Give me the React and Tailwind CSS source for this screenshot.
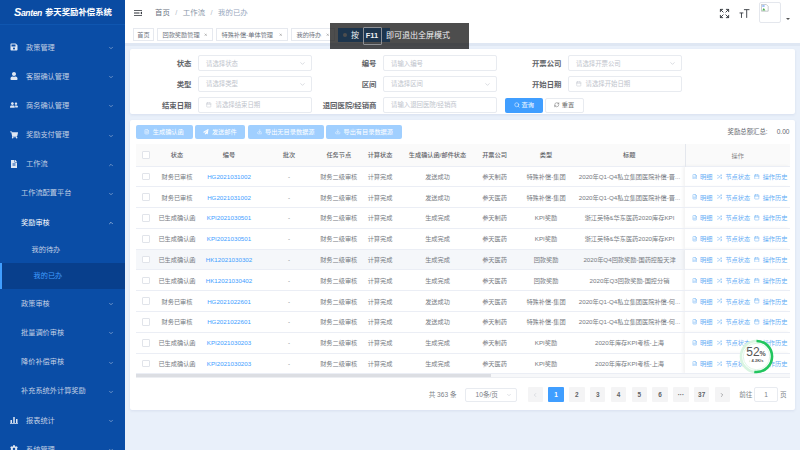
import React from "react";
import { ChevronDown, ChevronUp, ChevronLeft, ChevronRight, FileText, Download, Search, RefreshCw, Calendar, Expand, X, Shuffle, FileSpreadsheet } from "lucide-react";
import { FaSave, FaUser, FaUserFriends, FaShoppingCart, FaFileAlt, FaCog, FaPaperPlane } from "react-icons/fa";

const menu = [
  { label: "政策管理", icon: FaSave },
  { label: "客服确认管理", icon: FaUser },
  { label: "商务确认管理", icon: FaUserFriends },
  { label: "奖励支付管理", icon: FaShoppingCart },
  { label: "工作流", icon: FaFileAlt, open: true },
];

const rows = [
  ["财务已审核", "HG2021031002", "发送成功", "参天制药", "特殊补偿-集团", "2020年Q1-Q4私立集团医院补偿-晋..."],
  ["财务已审核", "HG2021031002", "发送成功", "参天医药", "特殊补偿-集团", "2020年Q1-Q4私立集团医院补偿-晋..."],
  ["已生成确认函", "KPI2021030501", "生成完成", "参天制药", "KPI奖励", "浙江英特&华东医药2020库存KPI"],
  ["已生成确认函", "KPI2021030501", "生成完成", "参天医药", "KPI奖励", "浙江英特&华东医药2020库存KPI"],
  ["已生成确认函", "HK12021030302", "生成完成", "参天医药", "回款奖励", "2020年Q4回款奖励-国药控股天津"],
  ["已生成确认函", "HK12021030402", "生成完成", "参天医药", "回款奖励", "2020年Q3回款奖励-国控分销"],
  ["财务已审核", "HG2021022601", "发送成功", "参天医药", "特殊补偿-集团", "2020年Q1-Q4私立集团医院补偿-何..."],
  ["财务已审核", "HG2021022601", "发送成功", "参天制药", "特殊补偿-集团", "2020年Q1-Q4私立集团医院补偿-何..."],
  ["已生成确认函", "KPI2021030203", "生成完成", "参天制药", "KPI奖励", "2020年库存KPI考核-上海"],
  ["已生成确认函", "KPI2021030203", "生成完成", "参天医药", "KPI奖励", "2020年库存KPI考核-上海"],
];

const BarsIcon = ({ className }) => (
  <svg viewBox="0 0 16 16" className={className} fill="currentColor">
    <path d="M1 8h3v6H1zM6.5 2h3v12h-3zM12 6h3v8h-3zM0 14.6h16V16H0z" />
  </svg>
);

const MenuItem = ({ label, icon: Icon, open }) => (
  <div className="flex items-center h-[29.2px] pt-[1.5px] pl-[10px] pr-[11px] text-[7.2px] text-[#c3d0e4]">
    <Icon className="w-[8px] h-[8px] text-[#dfe7f3] mr-[8px] -mt-[2px]" />
    <span className="flex-1">{label}</span>
    {open ? <ChevronUp className="w-[6px] h-[6px]" /> : <ChevronDown className="w-[6px] h-[6px]" />}
  </div>
);

const SubItem = ({ label, open, bold }) => (
  <div className={`flex items-center h-[29.2px] pt-[1.5px] pl-[21px] pr-[11px] text-[7.2px] ${bold ? "text-white" : "text-[#c3d0e4]"}`}>
    <span className="flex-1">{label}</span>
    {open ? <ChevronUp className="w-[6px] h-[6px]" /> : <ChevronDown className="w-[6px] h-[6px]" />}
  </div>
);

const Sidebar = () => (
  <div className="w-[125px] h-[450px] shrink-0 overflow-hidden bg-[#0a4da6]">
    <div className="flex items-center h-[25px] pl-[14px] border-b border-[#0f56b0] bg-[#0a4ba2] text-white">
      <span className="text-[8.6px] italic font-bold tracking-[-0.4px] w-[31px]">
        <span className="text-[11px]">S</span>anten
      </span>
      <span className="text-[8.4px] font-bold whitespace-nowrap">参天奖励补偿系统</span>
    </div>
    <div className="pt-[7.6px]">
      {menu.map((m) => (
        <MenuItem key={m.label} {...m} />
      ))}
      <SubItem label="工作流配置平台" />
      <SubItem label="奖励审核" open bold />
      <div className="flex items-center h-[26px] pt-[1.5px] pl-[31.5px] text-[7.2px] text-[#c3d0e4]">我的待办</div>
      <div className="flex items-center h-[26px] pt-[1.5px] pl-[31.5px] text-[7.2px] text-[#409eff] bg-[#083f8c] border-l-2 border-[#409eff]">我的已办</div>
      <SubItem label="政策审核" />
      <SubItem label="批量调价审核" />
      <SubItem label="降价补偿审核" />
      <SubItem label="补充系统外计算奖励" />
      <MenuItem label="报表统计" icon={BarsIcon} />
      <MenuItem label="系统管理" icon={FaCog} />
    </div>
  </div>
);

const Navbar = () => (
  <div className="flex items-center h-[26px] bg-white pl-[9px] pr-[10px] text-[7.4px] text-[#8a97a8]">
    <svg viewBox="0 0 16 12" className="w-[8px] h-[6px] mr-[13px]" fill="#2b2f36">
      <path d="M0 0h16v1.6H0zM0 5.2h11v1.6H0zM0 10.4h16V12H0zM16 3.2v5.6L12.6 6z" />
    </svg>
    <span className="text-[#6b7280]">首页</span>
    <span className="mx-[5.5px] text-[#b4bcc8]">/</span>
    <span>工作流</span>
    <span className="mx-[5.5px] text-[#b4bcc8]">/</span>
    <span className="text-[#97a8be]">我的已办</span>
    <div className="flex-1" />
    <Expand className="w-[11px] h-[11px] text-[#30343b] mr-[9px]" strokeWidth={2} />
    <svg viewBox="0 0 20 20" className="w-[11px] h-[11px] mr-[9px]" fill="none" stroke="#30343b" strokeWidth="1.6">
      <path d="M1 9h7M4.5 9v9M9 3h10M14 3v15" />
    </svg>
    <div className="w-[22px] h-[21px] rounded-[2px] border border-[#e4e7ed] bg-white mr-[4px] -mt-[1px] self-center">
      <svg viewBox="0 0 10 10" className="w-[8px] h-[8px] ml-[1px] mt-[1px]">
        <path d="M.5.5h6l2.5 2.5v6H.5z" fill="#fff" stroke="#9aa0a6" strokeWidth=".7" />
        <path d="M1.5 8l2-3 2 3z" fill="#4caf50" />
        <path d="M1.5 1.5h3v2h-3z" fill="#8ab4f8" />
      </svg>
    </div>
    <div className="w-0 h-0 mt-[12px] ml-[1px] border-x-[2px] border-x-transparent border-t-[2.5px] border-t-[#555]" />
  </div>
);

const Tag = ({ children, className }) => (
  <div className={`flex items-center justify-between shrink-0 h-[13px] pl-[4.5px] pr-[5px] bg-white border border-[#e6e9ef] text-[6.2px] text-[#6f7580] whitespace-nowrap ${className}`}>
    {children}
    <X className="w-[3.5px] h-[3.5px] text-[#777]" strokeWidth={3} />
  </div>
);

const TagsBar = () => (
  <div className="flex items-center gap-[3px] h-[17px] pl-[8px] bg-white border-b-[3px] border-[#dfe7f3] box-content">
    <div className="flex items-center justify-center h-[13px] w-[21px] bg-white border border-[#e6e9ef] text-[6.2px] text-[#6f7580]">首页</div>
    <Tag className="w-[56px]">回款奖励管理</Tag>
    <Tag className="w-[72px]">特殊补偿-单体管理</Tag>
    <Tag className="w-[44px]">我的待办</Tag>
    <div className="flex items-center h-[14px] w-[52px] pl-[5px] bg-[#409eff]">
      <span className="w-[4px] h-[4px] rounded-full bg-white" />
    </div>
  </div>
);

const Input = ({ placeholder, select, date }) => (
  <div className="flex items-center w-[114.5px] h-[16px] px-[7.5px] bg-white border border-[#e8ebf0] rounded-[2px] text-[6.4px] text-[#c0c4cc]">
    {date && <Calendar className="w-[5.5px] h-[5.5px] mr-[4px]" />}
    <span className="flex-1 whitespace-nowrap">{placeholder}</span>
    {select && <ChevronDown className="w-[7px] h-[7px] -mr-[2px]" />}
  </div>
);

const Field = ({ label, ...rest }) => (
  <div className="flex items-center justify-end gap-[6px]">
    <span className="text-[7.4px] font-bold text-[#5f6368] whitespace-nowrap">{label}</span>
    <Input {...rest} />
  </div>
);

const FilterCard = () => (
  <div className="grid grid-cols-[182px_185px_185px] gap-y-[3px] h-[65px] pt-[5.5px] bg-white rounded-[2px] shadow-[0_1px_3px_rgba(0,40,100,0.08)]">
    <Field label="状态" placeholder="请选择状态" select />
    <Field label="编号" placeholder="请输入编号" />
    <Field label="开票公司" placeholder="请选择开票公司" select />
    <Field label="类型" placeholder="请选择类型" select />
    <Field label="区间" placeholder="请选择区间" select />
    <Field label="开始日期" placeholder="请选择开始日期" date />
    <Field label="结束日期" placeholder="请选择结束日期" date />
    <Field label="退回医院/经销商" placeholder="请输入退回医院/经销商" />
    <div className="flex items-center gap-[2px] pl-[7.5px]">
      <button className="flex items-center justify-center gap-[2px] w-[38.5px] h-[15px] rounded-[2px] bg-[#409eff] text-white text-[6.2px]">
        <Search className="w-[6px] h-[6px]" />
        查询
      </button>
      <button className="flex items-center justify-center gap-[2px] w-[38.5px] h-[15px] rounded-[2px] bg-white border border-[#e8ebf0] text-[#666] text-[6.2px]">
        <RefreshCw className="w-[5.5px] h-[5.5px]" />
        重置
      </button>
    </div>
  </div>
);

const ActionButton = ({ icon: Icon, children, className }) => (
  <button className={`flex items-center justify-center gap-[3px] h-[14px] rounded-[2px] bg-[#a0cfff] text-white text-[6.2px] whitespace-nowrap ${className}`}>
    <Icon className="w-[5.5px] h-[5.5px]" />
    {children}
  </button>
);

const OpLink = ({ icon: Icon, children, className }) => (
  <span className={`flex items-center gap-[3px] text-[#66aef5] whitespace-nowrap ${className}`}>
    <Icon className="w-[5.5px] h-[5.5px]" />
    {children}
  </span>
);

const Checkbox = () => <div className="w-[7.5px] h-[7.5px] mx-auto bg-white border border-[#e1e4ea] rounded-[1px]" />;

const DataTable = () => (
  <table className="table-fixed w-[654.5px] border-collapse text-[6.2px] text-[#777b82] text-center">
    <colgroup>
      <col className="w-[21px]" />
      <col className="w-[41px]" />
      <col className="w-[63px]" />
      <col className="w-[57px]" />
      <col className="w-[42.5px]" />
      <col className="w-[40px]" />
      <col className="w-[75px]" />
      <col className="w-[39px]" />
      <col className="w-[64px]" />
      <col className="w-[107px]" />
      <col className="w-[105px]" />
    </colgroup>
    <thead>
      <tr className="h-[22px] bg-[#fafafa] text-[#5f6368] border-b border-[#ebeef5]">
        <th className="font-medium"><Checkbox /></th>
        <th className="font-medium">状态</th>
        <th className="font-medium">编号</th>
        <th className="font-medium">批次</th>
        <th className="font-medium">任务节点</th>
        <th className="font-medium">计算状态</th>
        <th className="font-medium whitespace-nowrap">生成确认函/邮件状态</th>
        <th className="font-medium">开票公司</th>
        <th className="font-medium">类型</th>
        <th className="font-medium pr-[4px]">标题</th>
        <th className="font-normal text-[#888] pt-[2px] border-l border-[#e4e7ed]">操作</th>
      </tr>
    </thead>
    <tbody>
      {rows.map((r, i) => (
        <tr key={i} className={`h-[20.8px] border-b border-[#ebeef5] ${i === 4 ? "bg-[#f5f7fa]" : ""}`}>
          <td><Checkbox /></td>
          <td>{r[0]}</td>
          <td className="text-[#409eff]">{r[1]}</td>
          <td>-</td>
          <td>财务二级审核</td>
          <td>计算完成</td>
          <td>{r[2]}</td>
          <td>{r[3]}</td>
          <td className="whitespace-nowrap">{r[4]}</td>
          <td className="pr-[4px] whitespace-nowrap">{r[5]}</td>
          <td className="bg-white shadow-[-2px_0_3px_rgba(0,0,0,0.05)]">
            <div className="flex items-center pl-[6.5px]">
              <OpLink icon={FileSpreadsheet} className="mr-[4.5px]">明细</OpLink>
              <OpLink icon={Shuffle} className="mr-[4px]">节点状态</OpLink>
              <OpLink icon={Calendar}>操作历史</OpLink>
            </div>
          </td>
        </tr>
      ))}
    </tbody>
  </table>
);

const PageButton = ({ children, active, className = "" }) => (
  <div className={`flex items-center justify-center w-[15.5px] h-[15px] rounded-[1px] text-[6.4px] font-bold ${active ? "bg-[#409eff] text-white" : "bg-[#f4f4f5] text-[#606266]"} ${className}`}>
    {children}
  </div>
);

const Pagination = () => (
  <div className="flex items-center justify-end h-[31px] pt-[3px] pr-[3px] text-[6.6px] text-[#7b7f87]">
    <span className="mr-[8px]">共 363 条</span>
    <div className="flex items-center justify-between w-[52px] h-[14.5px] pl-[10px] pr-[4px] mr-[11px] bg-white border border-[#e8ebf0] rounded-[2px]">
      10条/页
      <ChevronDown className="w-[6px] h-[6px] text-[#c0c4cc]" />
    </div>
    <div className="flex items-center gap-[5.3px] mr-[9px]">
      <PageButton><ChevronLeft className="w-[6px] h-[6px] text-[#c0c4cc]" /></PageButton>
      <PageButton active>1</PageButton>
      <PageButton>2</PageButton>
      <PageButton>3</PageButton>
      <PageButton>4</PageButton>
      <PageButton>5</PageButton>
      <PageButton>6</PageButton>
      <PageButton>···</PageButton>
      <PageButton>37</PageButton>
      <PageButton><ChevronRight className="w-[6px] h-[6px]" /></PageButton>
    </div>
    <span className="mr-[2px]">前往</span>
    <div className="flex items-center justify-center w-[23.5px] h-[15px] mr-[2px] bg-white border border-[#e8ebf0] rounded-[2px]">1</div>
    <span>页</span>
  </div>
);

const TableCard = () => (
  <div className="h-[290px] px-[5.5px] pt-[5.5px] bg-white rounded-[2px] shadow-[0_1px_3px_rgba(0,40,100,0.08)]">
    <div className="flex items-center h-[14px] mb-[5px]">
      <ActionButton icon={FileText} className="w-[57px] mr-[2.5px]">生成确认函</ActionButton>
      <ActionButton icon={FaPaperPlane} className="w-[50px] mr-[2.5px]">发送邮件</ActionButton>
      <ActionButton icon={Download} className="w-[76px] mr-[2.5px]">导出无目录数据源</ActionButton>
      <ActionButton icon={Download} className="w-[76px]">导出有目录数据源</ActionButton>
      <div className="flex-1" />
      <span className="text-[6.4px] text-[#666a70] mr-[9px]">奖励总额汇总:</span>
      <span className="text-[6.6px] text-[#666a70]">0.00</span>
    </div>
    <DataTable />
    <div className="h-[3.5px] bg-[#f7f8fa] border-b border-[#eceef2]">
      <div className="w-[355px] h-[3px] bg-[#dcdee3]" />
    </div>
    <Pagination />
  </div>
);

const SpeedRing = () => (
  <div className="absolute left-[738.5px] top-[338.5px] w-[35px] h-[35px]">
    <svg viewBox="0 0 36 36" className="absolute inset-0 w-full h-full">
      <circle cx="18" cy="18" r="16" fill="#fff" stroke="#d9f5e1" strokeWidth="2.6" />
      <circle cx="18" cy="18" r="16" fill="none" stroke="#22c55e" strokeWidth="2.6" strokeDasharray="52.3 100.5" transform="rotate(-90 18 18)" />
      <circle cx="18" cy="18" r="13.6" fill="#fff" stroke="#c9efd5" strokeWidth=".6" />
    </svg>
    <div className="absolute inset-0 flex flex-col items-center justify-center text-[#555]">
      <div className="leading-none text-[12px] -mt-[3px]">52<span className="text-[7px] font-bold">%</span></div>
      <div className="flex items-center gap-[1px] text-[4px] font-bold leading-none mt-[1px]">
        <span className="text-[#22c55e]">↓</span>4.2K/s
      </div>
    </div>
  </div>
);

const App = () => (
  <div className="relative flex w-[800px] h-[450px] overflow-hidden bg-[#e9f0fa] font-['Liberation_Sans','Noto_Sans_CJK_SC',sans-serif]">
    <Sidebar />
    <div className="flex-1 min-w-0">
      <Navbar />
      <TagsBar />
      <div className="pl-[5px] pr-[5px] pt-[3px]">
        <FilterCard />
        <div className="h-[5.5px]" />
        <TableCard />
      </div>
    </div>
    <div className="absolute left-[330px] top-[23px] flex items-center w-[139px] h-[26px] pl-[21px] bg-[#111111]/75 text-[#eef0f2] text-[8px]">
      <span>按</span>
      <span className="flex items-center justify-center w-[19px] h-[18px] ml-[3.5px] mr-[4.5px] border border-[#8d9095] rounded-[1px] text-[7.5px] font-bold">F11</span>
      <span>即可退出全屏模式</span>
    </div>
    <SpeedRing />
  </div>
);

export default App;
